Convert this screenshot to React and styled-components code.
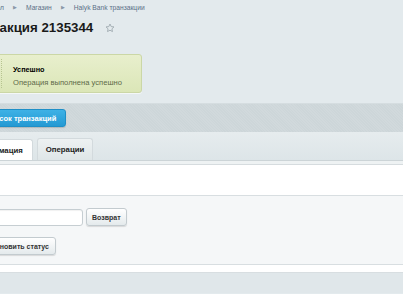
import React from "react";
import styled, { createGlobalStyle } from "styled-components";

const Global = createGlobalStyle`
  html, body { margin: 0; padding: 0; }
  body {
    width: 403px; height: 294px; overflow: hidden;
    background: #e3eaed;
    font-family: "Liberation Sans", Arial, sans-serif;
  }
`;

const Page = styled.div`
  width: 403px;
  height: 294px;
  overflow: hidden;
  background: #e3eaed;
`;

const Shift = styled.div`
  margin-left: ${(p) => p.$left}px;
`;

const Breadcrumbs = styled.div`
  display: flex;
  align-items: center;
  height: 14px;
  font-size: 6.7px;
  color: #5b6f87;
  white-space: nowrap;
`;

const Sep = styled.span`
  margin: 0 9px 0 9px;
  font-size: 5px;
  color: #8a97a6;
`;

const TitleRow = styled.div`
  display: flex;
  align-items: center;
  height: 28px;
  margin-top: -1px;
`;

const Title = styled.h1`
  margin: 0;
  font-size: 13.3px;
  font-weight: bold;
  color: #1a1a1a;
  white-space: nowrap;
`;

const Star = styled.svg`
  margin-left: 12px;
  margin-top: 2px;
`;

const Message = styled.div`
  margin-top: 13px;
  width: 180px;
  height: 39px;
  box-sizing: border-box;
  border: 1px solid #cbd7a6;
  border-radius: 3px;
  background: linear-gradient(#e8efcd, #dbe6b7);
  display: flex;
  box-shadow: 0 1px 0 rgba(255,255,255,0.6);
`;

const MsgIcon = styled.div`
  width: 38px;
  border-right: 1px dotted #b7c490;
  margin: 4px 0;
`;

const MsgBody = styled.div`
  padding: 10px 0 0 11px;
  display: flex;
  flex-direction: column;
  gap: 4px;
`;

const MsgTitle = styled.div`
  font-size: 7.3px;
  font-weight: bold;
  color: #000;
`;

const MsgText = styled.div`
  font-size: 7.6px;
  color: #5d6948;
  white-space: nowrap;
`;

const Toolbar = styled.div`
  margin-top: 10px;
  height: 28px;
  display: flex;
  align-items: center;
  border-top: 1px solid #d5dde0;
  background-color: #cdd6d9;
  background-image: repeating-linear-gradient(45deg, rgba(255,255,255,0.08) 0 1px, transparent 1px 2px);
`;

const BlueButton = styled.button`
  margin-left: -25px;
  height: 18px;
  width: 91px;
  border: 1px solid #1e8fc7;
  border-radius: 3px;
  background: linear-gradient(#3db1e6, #2499d3);
  color: #fff;
  font-family: inherit;
  font-size: 7.5px;
  font-weight: bold;
  padding: 0;
  white-space: nowrap;
  box-shadow: 0 1px 1px rgba(0,0,0,0.15);
`;

const TabsBar = styled.div`
  height: 29px;
  background: linear-gradient(#e6ecee, #dde5e8);
  display: flex;
  align-items: flex-end;
  gap: 4px;
  border-bottom: 1px solid #ccd4d7;
  box-sizing: border-box;
`;

const Tab = styled.div`
  height: ${(p) => (p.$active ? 21 : 22)}px;
  box-sizing: border-box;
  display: flex;
  align-items: center;
  justify-content: center;
  font-size: 7.8px;
  font-weight: bold;
  color: #222;
  white-space: nowrap;
  border: 1px solid #d3dadd;
  border-bottom: none;
  border-radius: 3px 3px 0 0;
  background: ${(p) => (p.$active ? "#ffffff" : "linear-gradient(#edf1f2, #dfe6e8)")};
  width: ${(p) => p.$w}px;
  margin-left: ${(p) => p.$ml || 0}px;
`;

const TabGap = styled.div`
  height: 3px;
  background: #eef2f3;
  border-bottom: 1px solid #d6dcdf;
`;

const White = styled.div`
  height: ${(p) => p.$h}px;
  background: #fff;
  border-bottom: 1px solid #d8dee1;
`;

const Form = styled.div`
  background: #f5f7f8;
  border-bottom: 1px solid #d8dee1;
  height: 69px;
  box-sizing: border-box;
  display: flex;
  flex-direction: column;
  padding-top: 12px;
  gap: 11px;
`;

const Row = styled.div`
  display: flex;
  align-items: center;
  gap: 3px;
`;

const Input = styled.input`
  width: ${(p) => p.$w}px;
  height: 17px;
  box-sizing: border-box;
  border: 1px solid #c6ced2;
  border-radius: 3px;
  background: #fff;
  font-family: inherit;
  font-size: 7.5px;
  color: #222;
  padding: 0 5px;
  margin: 0;
  box-shadow: inset 0 1px 1px rgba(0,0,0,0.06);
`;

const Button = styled.button`
  height: 18px;
  box-sizing: border-box;
  padding: 0 ${(p) => p.$px || 5}px;
  border: 1px solid #c3cbcf;
  border-radius: 3px;
  background: linear-gradient(#ffffff, #e4eaec);
  font-family: inherit;
  font-size: 7px;
  font-weight: bold;
  color: #333;
  white-space: nowrap;
  margin: 0;
  box-shadow: 0 1px 1px rgba(0,0,0,0.12);
`;

const Bottom = styled.div`
  height: 20px;
  background: #e0e7ea;
`;

export default function App() {
  return (
    <Page>
      <Global />
      <Shift $left={-38}>
        <Breadcrumbs>
          <span>Рабочий стол</span>
          <Sep>▶</Sep>
          <span>Магазин</span>
          <Sep>▶</Sep>
          <span>Halyk Bank транзакции</span>
        </Breadcrumbs>
        <TitleRow>
          <Title>Транзакция 2135344</Title>
          <Star width="10" height="10" viewBox="0 0 24 24">
            <path d="M12 2.5l2.9 6.1 6.6.8-4.9 4.6 1.3 6.6L12 17.3l-5.9 3.3 1.3-6.6-4.9-4.6 6.6-.8z" fill="none" stroke="#9aa5ab" strokeWidth="2" strokeLinejoin="round" />
          </Star>
        </TitleRow>
        <Message>
          <MsgIcon />
          <MsgBody>
            <MsgTitle>Успешно</MsgTitle>
            <MsgText>Операция выполнена успешно</MsgText>
          </MsgBody>
        </Message>
      </Shift>
      <Toolbar>
        <BlueButton>Список транзакций</BlueButton>
      </Toolbar>
      <TabsBar>
        <Tab $active $w={71} $ml={-38}>Информация</Tab>
        <Tab $w={56}>Операции</Tab>
      </TabsBar>
      <TabGap />
      <White $h={30} />
      <Form>
        <Row>
          <Input $w={120} defaultValue="1000" style={{ marginLeft: -37 }} />
          <Button $px={5}>Возврат</Button>
        </Row>
        <Row>
          <Button $px={6} style={{ marginLeft: -17 }}>Обновить статус</Button>
        </Row>
      </Form>
      <White $h={7} />
      <Bottom />
    </Page>
  );
}
